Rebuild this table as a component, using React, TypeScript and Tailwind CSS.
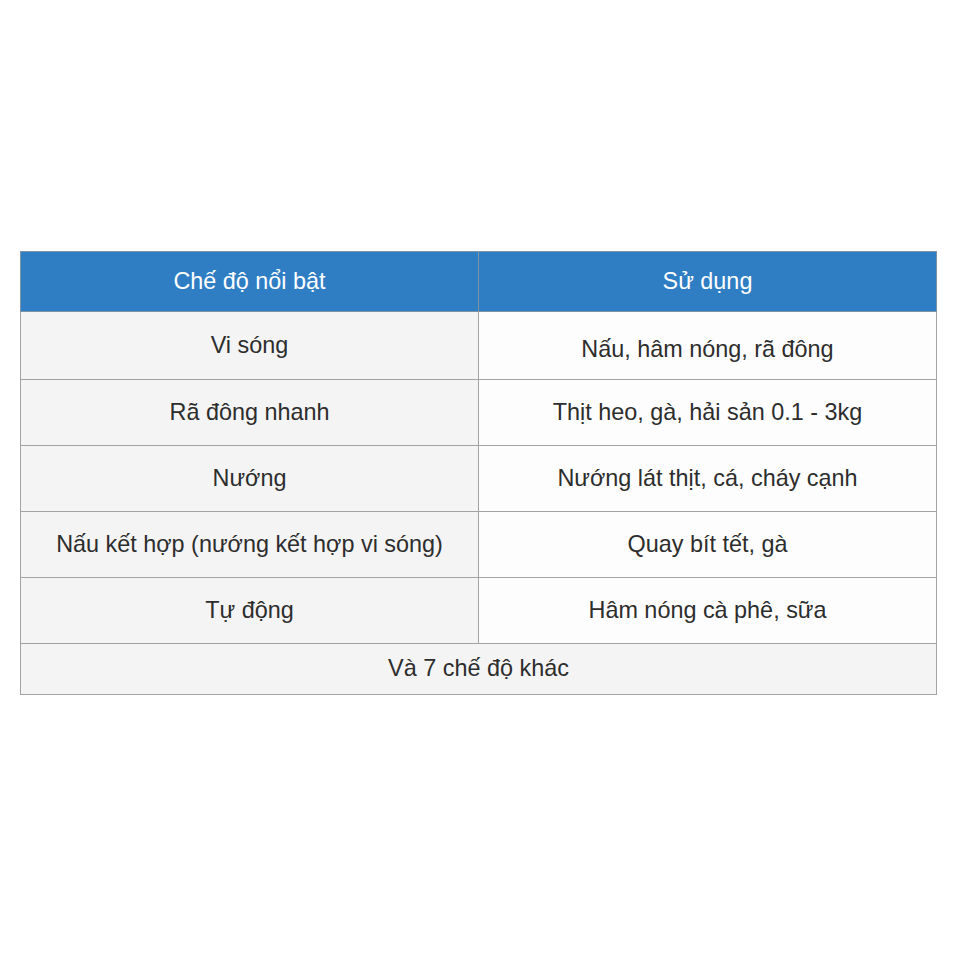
const rows = [
  ['Vi sóng', 'Nấu, hâm nóng, rã đông'],
  ['Rã đông nhanh', 'Thịt heo, gà, hải sản 0.1 - 3kg'],
  ['Nướng', 'Nướng lát thịt, cá, cháy cạnh'],
  ['Nấu kết hợp (nướng kết hợp vi sóng)', 'Quay bít tết, gà'],
  ['Tự động', 'Hâm nóng cà phê, sữa'],
]

export default function App() {
  return (
    <div
      className="w-[960px] h-[960px] bg-white pt-[251px] pl-[20px]"
      style={{ fontFamily: '"Liberation Sans", Arial, sans-serif' }}
    >
      <table className="w-[917px] border-collapse text-[23.4px] text-[#2d2d2d]">
        <thead>
          <tr className="h-[60px] bg-[#2f7ec4] text-white">
            <th className="w-[458px] font-normal border border-[#7f93a6]">Chế độ nổi bật</th>
            <th className="font-normal border border-[#7f93a6]">Sử dụng</th>
          </tr>
        </thead>
        <tbody>
          {rows.map((r, i) => (
            <tr key={i} className={i === 0 ? 'h-[68px]' : 'h-[66px]'}>
              <td className="bg-[#f4f4f4] text-center border border-[#a3a3a3]">{r[0]}</td>
              <td
                className={`bg-[#fdfdfd] text-center border border-[#a3a3a3] ${i === 0 ? 'pt-2' : ''}`}
              >
                {r[1]}
              </td>
            </tr>
          ))}
          <tr className="h-[51px]">
            <td colSpan={2} className="bg-[#f4f4f4] text-center border border-[#a3a3a3]">
              Và 7 chế độ khác
            </td>
          </tr>
        </tbody>
      </table>
    </div>
  )
}
